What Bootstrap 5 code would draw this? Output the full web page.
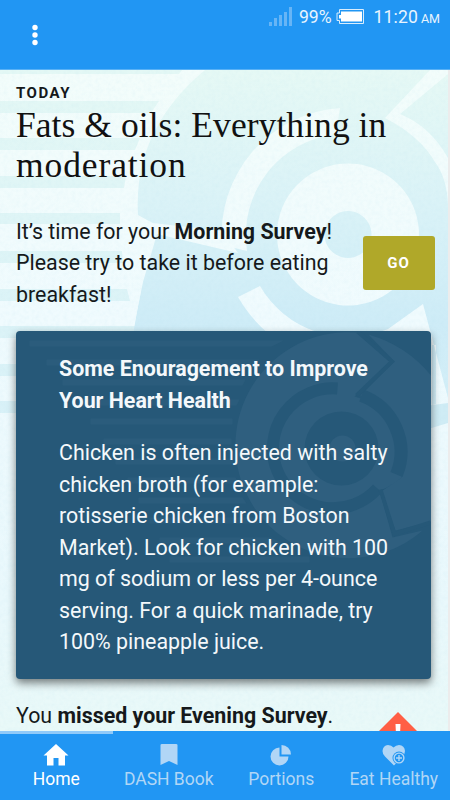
<!DOCTYPE html>
<html lang="en">
<head>
<meta charset="utf-8">
<meta name="viewport" content="width=device-width, initial-scale=1">
<title>Today</title>
<link href="https://cdn.jsdelivr.net/npm/bootstrap@5.3.0/dist/css/bootstrap.min.css" rel="stylesheet">
<style>
  body { font-family: Roboto, sans-serif; color: #15191b; background: #ececec; }
  .screen { width: 450px; height: 800px; }
  .appbar { height: 70px; background: #2196f3; border-bottom: 1px solid #59b1f5; flex: none; }
  .status { height: 32px; padding: 2px 10px 0 0; font-size: 17.6px; line-height: 31px; color: #e8f4fe; }
  .ampm { font-size: 12.5px; margin-left: 3px; padding-top: 1px; }
  .signal { margin: 2px 6px 0 0; }
  .battery { margin: 6px 9px 0 4px; }
  .dots { margin: -8px 0 0 31px; width: 8px; }
  .clock { letter-spacing: .1px; }
  .page-area { width: 448px; background: #effafa; }
  .backdrop { inset: 0; }
  .content-area { padding: 14px 16px 0; }
  .eyebrow { font-size: 15px; line-height: 18px; letter-spacing: 1.5px; font-weight: 700; }
  .headline { font-family: "Liberation Serif", serif; font-size: 35.5px; line-height: 40px; margin: 3px 0 0; font-weight: 400; white-space: nowrap; color: #111; }
  .l1 { letter-spacing: .06px; }
  .l2 { letter-spacing: .9px; }
  .prose { font-size: 21.4px; line-height: 31.5px; white-space: nowrap; }
  .survey { margin-top: 30.5px; }
  .go { width: 72px; height: 54px; margin: 1px -3px 0 0; background: #b0a829; color: #fff; border-radius: 3px; font-weight: 700; font-size: 15px; letter-spacing: 1px; border: 0; padding: 0 1px 0 0; }
  .go:hover { background: #a09820; color: #fff; }
  .tip { width: 415px; height: 348px; margin-top: 21px; border-radius: 4px; background: #265878; color: #f4f8fb; box-shadow: 0 4px 8px rgba(0,0,0,.5); border: 0; }
  .tip-text { padding: 22px 0 0 43px; }
  .tip-body { margin-top: 21px; }
  .missed { margin-top: 21px; }
  .warn { width: 44px; height: 44px; margin: 12px 12px 0 0; flex: none; }
  .tabs { height: 69px; background: #2196f3; color: #b1d6f6; flex: none; font-size: 17.5px; line-height: 20px; }
  .tabs a { color: inherit; width: 112.5px; padding-top: 12px; white-space: nowrap; }
  .tabs a.on { color: #fff; box-shadow: inset 0 3px #90caf9; }
  .tabs svg { width: 26px; height: 26px; }
</style>
</head>
<body>
<div class="screen d-flex flex-column overflow-hidden">
  <header class="appbar">
    <div class="status d-flex justify-content-end">
      <svg class="signal" width="24" height="22" viewBox="0 0 24 22" fill="#67b5f6"><path d="M0 18h3v4H0zM5 14h3v8H5zM10 11h3v11h-3zM15 8h3v14h-3zM20 3h3v19h-3z"/></svg>
      <span>99%</span>
      <svg class="battery" width="29" height="18" viewBox="0 0 29 18"><path d="M3.500 1.500h24v14h-24v-3h-2.500v-7.500h2.500z" fill="none" stroke="#d9edfd"/><path d="M5 3.500h21v10H5v-3H3V7h2z" fill="#fff"/></svg>
      <span class="clock">11:20</span><span class="ampm">AM</span>
    </div>
    <svg class="dots d-block" width="8" height="22" viewBox="0 0 8 22" fill="#fff"><circle cx="4" cy="3.500" r="2.700"/><circle cx="4" cy="11" r="2.700"/><circle cx="4" cy="18.500" r="2.700"/></svg>
  </header>

  <main class="page-area flex-grow-1 position-relative overflow-hidden">
    <svg class="backdrop position-absolute" width="448" height="661" viewBox="0 70 448 661">
      <defs>
        <linearGradient id="sky" gradientUnits="userSpaceOnUse" x1="0" y1="70" x2="0" y2="430"><stop offset="0" stop-color="#e6f9f5"/><stop offset=".35" stop-color="#dbf3f7"/><stop offset=".7" stop-color="#ceecf7"/><stop offset="1" stop-color="#d6f0f8"/></linearGradient>
        <linearGradient id="stripes" gradientUnits="userSpaceOnUse" x1="0" y1="70" x2="0" y2="430"><stop offset="0" stop-color="#e4f8f5"/><stop offset="1" stop-color="#d8f1f8"/></linearGradient>
        <linearGradient id="pale" gradientUnits="userSpaceOnUse" x1="0" y1="70" x2="0" y2="731"><stop offset="0" stop-color="#f3fdfb"/><stop offset=".38" stop-color="#f0fbfe"/><stop offset=".8" stop-color="#e9f8fc"/><stop offset="1" stop-color="#e9f9f8"/></linearGradient>
        <filter id="grain" x="0" y="0" width="100%" height="100%"><feTurbulence type="fractalNoise" baseFrequency=".25" numOctaves="3" seed="4"/><feColorMatrix values="0 0 0 0 .45  0 0 0 0 .72  0 0 0 0 .82  .5 0 0 0 -.18"/></filter>
      </defs>
      <path fill="url(#pale)" d="M0 70h448v661H0z"/>
      <path fill="url(#stripes)" d="M0 70h182l-3 4H0zM0 101h159l-8 12H0zM0 138h140l-5 12H0zM0 176h126l-2 12H0zM0 213h120v11H0zM0 251h122l1 12H0zM0 289h127l3 12H0zM0 326h135v12H0zM0 364h135v12H0zM0 401h135v12H0z"/>
      <path fill="url(#sky)" d="M205 70H448V401L432 405V345H131L153 224L138 215Q133 130 205 70Z"/>
      <g fill="url(#pale)">
        <path d="M137 215L153 223L222 231L238 253L157 234L143 282L134 326H131L137 250Z"/>
        <path d="M348 163.500a71 71 0 1 0 .01 0zM348 211a23.500 23.500 0 1 1-.01 0z" fill-rule="evenodd"/>
        <path d="M340 108A127 127 0 0 0 222 245L247 251A102 102 0 0 1 336 134Z"/>
        <path d="M448 70H430L385 118Q420 136 435 162Q447 178 448 205V158Q430 126 400 114L448 74Z"/>
        <path d="M238 297L260 286A102 102 0 0 0 388 329L423 304L448 398V402L436 406V345H285Q256 328 238 297Z"/>
      </g>
      <path d="M425 406L448 403V423L425 430Z" fill="#cfecf5"/>
      <rect y="70" width="448" height="661" filter="url(#grain)" opacity=".4"/>
    </svg>

    <div class="content-area position-relative">
      <div class="eyebrow">TODAY</div>
      <h1 class="headline"><span class="l1">Fats &amp; oils: Everything in</span><br><span class="l2">moderation</span></h1>

      <section class="survey d-flex justify-content-between align-items-center">
        <div class="prose">It’s time for your <b>Morning Survey</b>!<br>Please try to take it before eating<br>breakfast!</div>
        <button class="go btn">GO</button>
      </section>

      <article class="tip card">
        <svg class="backdrop position-absolute" width="415" height="348" viewBox="16.500 331.500 415 348">
          <path fill="#2d5e7e" opacity=".75" d="M30 341h254l-12 6H30zM47 360h213l-7 6H47zM63 380h183l-3 6H63zM78 400h162l-3 6H78zM91 419h142v6H91zM104 439h128v6H104zM116 459h117l1 6H116zM128 478h108l3 6H128zM139 498h104l4 6H139zM150 518h104l6 6H150zM160 538h112l10 6H160zM170 557h140v6H170z"/>
          <path fill="#2f5f7f" d="M358 333A113 113 0 1 0 423 531L393 538L380 491A60 60 0 0 0 402 478A66 66 0 0 0 355 397L390 362Z"/>
          <path fill="#2f5f7f" d="M369 335L395 362L361 396Q405 410 406 445L402 478L382 492L396 531L431.500 522V376Q407 346 369 335Z"/>
          <g fill="none" stroke="#265878"><path d="M338 389A60 60 0 1 0 378 489" stroke-width="12"/><path d="M362 396A60 60 0 0 1 397 475" stroke-width="13"/><path d="M358 332L392.500 362L357 396M381 490L395 534.500L431 523" stroke-width="4"/></g>
          <circle cx="342" cy="449" r="37" fill="#265878"/><circle cx="343" cy="449" r="13" fill="#2f5f7f"/>
        </svg>
        <div class="tip-text prose position-relative">
          <b>Some Enouragement to Improve<br>Your Heart Health</b>
          <div class="tip-body">Chicken is often injected with salty<br>chicken broth (for example:<br>rotisserie chicken from Boston<br>Market). Look for chicken with 100<br>mg of sodium or less per 4-ounce<br>serving. For a quick marinade, try<br>100% pineapple juice.</div>
        </div>
      </article>

      <section class="missed d-flex justify-content-between align-items-start">
        <div class="prose">You <b>missed your Evening Survey</b>.</div>
        <svg class="warn" viewBox="0 0 44 44"><path d="M22 0L44 22L22 44L0 22Z" fill="#ff5f45"/><path d="M19.500 12h5l-.6 13h-3.800zM20 28h4v4h-4z" fill="#fff"/></svg>
      </section>
    </div>
  </main>

  <nav class="tabs d-flex text-center">
    <a class="on d-flex flex-column align-items-center text-decoration-none" href="#"><svg viewBox="0 0 26 26"><path d="M13 1L0.500 12.500H4V22.500H10.500V15H15.500V22.500H22V12.500H25.500Z" fill="currentColor"/></svg>Home</a>
    <a class="d-flex flex-column align-items-center text-decoration-none" href="#"><svg viewBox="0 0 26 26"><path d="M6 1H20q1.500 0 1.500 1V22L13 18L4.500 22V2Q4.500 1 6 1Z" fill="currentColor"/></svg>DASH Book</a>
    <a class="d-flex flex-column align-items-center text-decoration-none" href="#"><svg viewBox="0 0 26 26" fill="currentColor"><path d="M11.500 4.500V13.500H20.500A9 9 0 1 1 11.500 4.500Z"/><path d="M13.500 2A9.500 9.500 0 0 1 23 11.500H13.500Z"/></svg>Portions</a>
    <a class="d-flex flex-column align-items-center text-decoration-none" href="#"><svg viewBox="0 0 26 26"><path d="M13 22.500L4 13.500Q1.500 11 1.500 8Q2 2.500 7 2Q10.500 2 12.500 4.500Q15 2 18 2Q23.500 2.500 24 8Q24 11 21.500 13.500Z" fill="currentColor"/><circle cx="18" cy="15" r="6.500" fill="#2196f3"/><circle cx="18" cy="15" r="4.900" fill="none" stroke="currentColor" stroke-width="1.400"/><path d="M18 12v6M15 15h6" stroke="currentColor" stroke-width="1.400"/></svg>Eat Healthy</a>
  </nav>
</div>
<script src="https://cdn.jsdelivr.net/npm/bootstrap@5.3.0/dist/js/bootstrap.bundle.min.js"></script>
</body>
</html>
